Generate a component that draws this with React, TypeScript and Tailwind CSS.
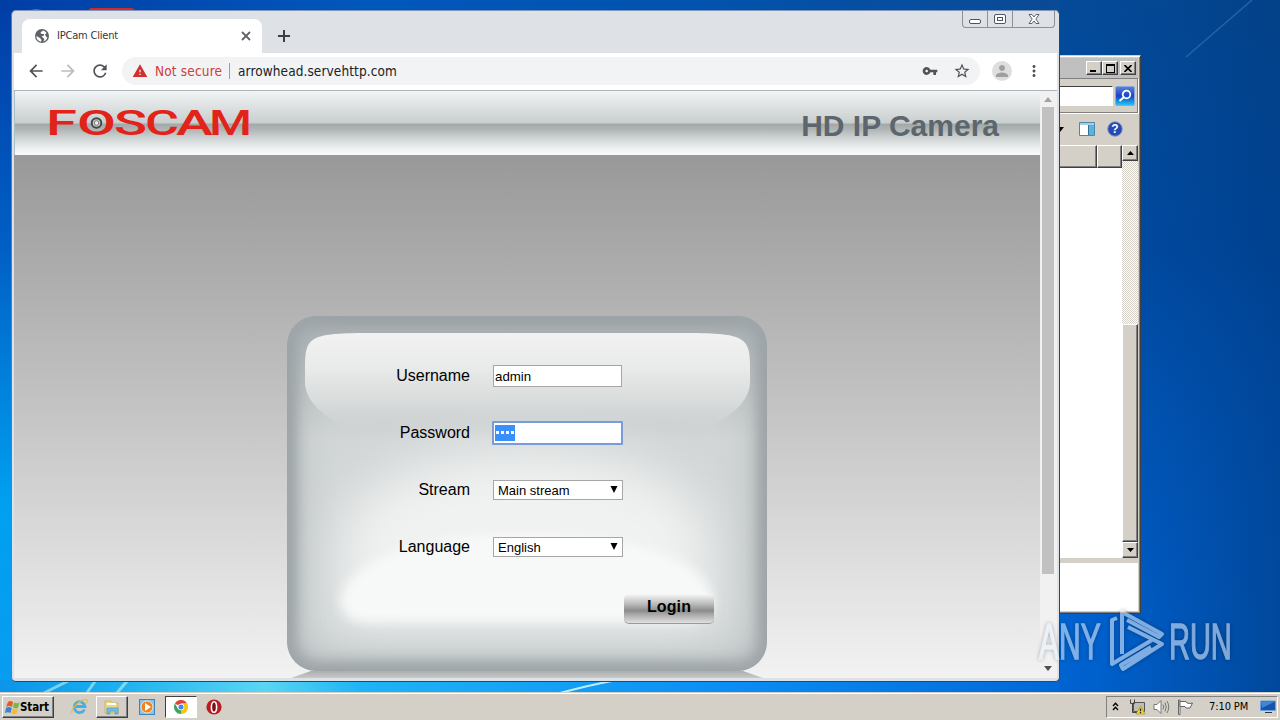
import React from 'react';
import { MdArrowBack, MdArrowForward, MdRefresh, MdWarning, MdStarBorder, MdMoreVert, MdPerson, MdVpnKey } from 'react-icons/md';

const RAISED = 'border border-t-white border-l-white border-r-[#404040] border-b-[#404040] bg-[#d4d0c8] shadow-[inset_-1px_-1px_0_#808080]';

const LOGO_LETTERS = [
  { char: 'F', x: 46, width: 31 },
  { char: 'O', x: 77, width: 39 },
  { char: 'S', x: 114, width: 33 },
  { char: 'C', x: 145, width: 34 },
  { char: 'A', x: 176, width: 37 },
  { char: 'M', x: 209, width: 43 },
];

const Wallpaper: React.FC = () => (
  <svg className="absolute inset-0" width="1280" height="720" viewBox="0 0 1280 720">
    <defs>
      <linearGradient id="left" x1="0" y1="0" x2="0" y2="1">
        <stop offset="0" stopColor="#003ea6" />
        <stop offset=".35" stopColor="#0060c6" />
        <stop offset=".7" stopColor="#00a0f0" />
        <stop offset="1" stopColor="#0b9bf0" />
      </linearGradient>
      <linearGradient id="right" x1="0" y1="0" x2="1" y2="0">
        <stop offset="0" stopColor="#0068d6" />
        <stop offset=".35" stopColor="#0060cc" />
        <stop offset="1" stopColor="#00489c" />
      </linearGradient>
      <linearGradient id="dusk" x1="0" y1="0" x2="0" y2="1">
        <stop offset="0" stopColor="#053f80" stopOpacity=".7" />
        <stop offset=".35" stopColor="#003d88" stopOpacity=".6" />
        <stop offset=".85" stopColor="#0048a0" stopOpacity="0" />
      </linearGradient>
      <linearGradient id="top" x1="0" y1="0" x2="1" y2="0">
        <stop offset="0" stopColor="#003ea6" />
        <stop offset=".35" stopColor="#0058bc" />
        <stop offset=".65" stopColor="#0053ae" />
        <stop offset="1" stopColor="#0b4a94" />
      </linearGradient>
      <linearGradient id="floor" x1="0" y1="0" x2="1" y2="0">
        <stop offset="0" stopColor="#0c94ea" />
        <stop offset=".1" stopColor="#18aef0" />
        <stop offset=".25" stopColor="#5ad6f2" />
        <stop offset=".34" stopColor="#1eb4f6" />
        <stop offset=".7" stopColor="#0a8cf4" />
        <stop offset="1" stopColor="#0068d6" />
      </linearGradient>
    </defs>
    <rect width="1280" height="720" fill="url(#left)" />
    <rect x="1000" width="280" height="720" fill="url(#right)" />
    <rect x="1000" width="280" height="720" fill="url(#dusk)" />
    <rect width="1060" height="12" fill="url(#top)" />
    <rect y="680" width="1060" height="14" fill="url(#floor)" />
    <path d="M1186 57 1252 0" stroke="#5d8fc4" strokeOpacity=".4" strokeWidth="1.5" />
    <path d="M42 694 70 680M86 694 96 680M116 694 128 680" stroke="#c5f2ef" strokeOpacity=".6" strokeWidth="3" />
    <path d="M560 693Q590 685 612 681" stroke="#bdeeff" strokeWidth="2" fill="none" />
    <path d="M24 11Q36 8 48 11" fill="#8cb4e0" />
    <rect x="89" y="8" width="45" height="5" rx="2" fill="#cf2a25" />
  </svg>
);

const ExplorerWindow: React.FC = () => (
  <div className="absolute left-[860px] top-[55px] flex h-[559px] w-[281px] flex-col border border-r-[#404040] border-b-[#404040] border-t-[#d4d0c8] border-l-[#d4d0c8] bg-[#d4d0c8] p-[2px] shadow-[inset_1px_1px_0_#fff,inset_-1px_-1px_0_#808080]">
    <div className="flex h-[20px] shrink-0 items-center justify-end bg-[#c0c0c0] pr-[2px]">
      <div className={`flex h-[14px] w-[16px] items-end pb-[2px] pl-[3px] ${RAISED}`}><div className="h-[2px] w-[6px] bg-black" /></div>
      <div className={`flex h-[14px] w-[16px] items-center justify-center ${RAISED}`}><div className="h-[9px] w-[9px] border border-t-2 border-black" /></div>
      <div className={`ml-[2px] flex h-[14px] w-[16px] items-center justify-center ${RAISED}`}>
        <svg width="8" height="7" viewBox="0 0 8 7"><path d="M.5 0 7.5 7M7.5 0 .5 7" stroke="#000" strokeWidth="1.6" /></svg>
      </div>
    </div>
    <div className="flex h-[35px] shrink-0 items-center justify-end border border-[#808080] pr-[2px] shadow-[1px_1px_0_#fff]">
      <div className="mr-[2px] h-[20px] w-[200px] border border-t-[#404040] border-l-[#404040] border-r-white border-b-white bg-white" />
      <div className="flex h-[20px] w-[20px] items-center justify-center rounded-xs border border-[#8aa8d8] bg-linear-to-b from-[#5680dc] via-[#1d40c4] to-[#28c4f0]">
        <svg width="16" height="16" viewBox="0 0 16 16" fill="none" stroke="#fff"><circle cx="9.5" cy="6.5" r="3.8" strokeWidth="1.8" /><path d="M6.500 9.500 2.500 13" strokeWidth="2" /></svg>
      </div>
    </div>
    <div className="flex h-[32px] shrink-0 items-center justify-end gap-[12px] pr-[15px]">
      <svg className="mr-[3px]" width="8" height="5" viewBox="0 0 8 5"><path d="M0 0H8L4 5Z" /></svg>
      <svg width="16" height="14" viewBox="0 0 16 14"><path d="M.5.5H15.5V13.5H.5Z" fill="#fff" stroke="#5484a8" /><path d="M1 1H15V3H1Z" fill="#a7cfe6" /><path d="M10 3H15V13H10Z" fill="#55b5dd" /><path d="M9.5 3V13" stroke="#35718f" /></svg>
      <svg width="16" height="16" viewBox="0 0 16 16"><circle cx="8" cy="8" r="7.3" fill="#2749b4" stroke="#8c9ac9" /><text x="8" y="12.4" textAnchor="middle" fontSize="12" fontWeight="700" fill="#fff" fontFamily="Liberation Sans, sans-serif">?</text></svg>
    </div>
    <div className="flex min-h-0 flex-1">
      <div className="flex flex-1 flex-col bg-white">
        <div className="flex h-[23px] justify-end">
          <div className={`h-full flex-1 ${RAISED}`} />
          <div className={`h-full w-[25px] ${RAISED}`} />
        </div>
      </div>
      <div className="flex w-[16px] flex-col bg-[#e9e6e2]">
        <div className={`flex h-[16px] items-center justify-center ${RAISED}`}><svg width="7" height="4" viewBox="0 0 7 4"><path d="M0 4H7L3.500 0Z" /></svg></div>
        <div className="flex-1 bg-[repeating-conic-gradient(#d4d0c8_0_25%,#fff_0_50%)] bg-size-[2px_2px]" />
        <div className={`h-[218px] ${RAISED}`} />
        <div className={`flex h-[16px] items-center justify-center ${RAISED}`}><svg width="7" height="4" viewBox="0 0 7 4"><path d="M0 0H7L3.500 4Z" /></svg></div>
      </div>
    </div>
    <div className="mt-[5px] h-[48px] shrink-0 bg-white" />
  </div>
);

const FoscamLogo: React.FC = () => (
  <svg width="204" height="30" viewBox="46 107 204 30" className="overflow-visible">
    <g fill="#e2231a" fontFamily="Roboto, Liberation Sans, sans-serif" fontWeight="500" fontSize="35">
      {LOGO_LETTERS.map(({ char, x, width }) => (
        <text key={char} x={x} y="135" textLength={width} lengthAdjust="spacingAndGlyphs">{char}</text>
      ))}
    </g>
    <circle cx="96.500" cy="123" r="4.800" fill="#c9cdca" stroke="#424949" strokeWidth="2" />
    <circle cx="96.500" cy="123" r="2.300" fill="#eee" stroke="#777" />
  </svg>
);

const PanelGloss: React.FC = () => (
  <svg className="absolute inset-0" width="480" height="355" viewBox="0 0 480 355">
    <defs>
      <linearGradient id="gloss" x1="0" y1="17" x2="0" y2="122" gradientUnits="userSpaceOnUse">
        <stop offset="0" stopColor="#f2f2f2" />
        <stop offset=".35" stopColor="#e8e9e9" />
        <stop offset=".65" stopColor="#d9dcdc" />
        <stop offset="1" stopColor="#d0d4d4" stopOpacity="0" />
      </linearGradient>
    </defs>
    <path d="M18 52C18 22 21 17 80 17H400C459 17 463 22 463 52V66C463 88 437 106 408 118Q390 124 360 124H120Q90 124 72 118C43 106 18 88 18 66Z" fill="url(#gloss)" />
  </svg>
);

const Row: React.FC<{ label: string; children: React.ReactNode }> = ({ label, children }) => (
  <div className="flex h-[57px] items-center">
    <label className="w-[183px] pb-[1px] text-right text-[16px] leading-[20px]">{label}</label>
    <div className="ml-[22px] pb-[2px]">{children}</div>
  </div>
);

const Select: React.FC<{ value: string }> = ({ value }) => (
  <div className="ml-px flex h-[20px] w-[130px] items-center justify-between border border-[#a6a6a6] bg-white pr-[4px] pl-[4px] text-[13px]">
    <span className="pt-[2px]">{value}</span>
    <svg width="8" height="7" viewBox="0 0 8 7"><path d="M.5 0H7.500L4 7Z" /></svg>
  </div>
);

const LoginPanel: React.FC = () => (
  <div className="relative mt-[161px] ml-[273px] h-[355px] w-[480px] overflow-hidden rounded-[29px] bg-linear-to-b from-[#a9afb1] via-[#d2d6d6] via-35% to-[#d0d5d5]">
    {/* glossy layers behind the form */}
    <div className="absolute right-[56px] bottom-[42px] left-[52px] h-[180px] rounded-t-[50%] bg-[#f0f1f1] blur-[26px]" />
    <div className="absolute top-[218px] right-[54px] left-[54px] h-[88px] rounded-[50%_50%_22px_22px/80%_80%_22px_22px] bg-[#f7f9f8] blur-[6px]" />
    <div className="absolute inset-0 rounded-[29px] shadow-[inset_0_0_44px_2px_#a6adb1,inset_0_0_13px_8px_#8f9698]" />
    <PanelGloss />

    <div className="relative pt-[32px]">
      <Row label="Username">
        <div className="ml-px flex h-[22px] w-[129px] items-center border border-[#a5a5a5] bg-white pt-[2px] pl-px text-[13.3px]">admin</div>
      </Row>
      <Row label="Password">
        <div className="flex h-[24px] w-[131px] items-center rounded-[1px] border-2 border-[#789bdc] bg-white pl-px">
          <div className="flex h-[16px] w-[20px] items-center justify-center gap-[2px] bg-[#3990fc]">
            {[0, 1, 2, 3].map((i) => (
              <i key={i} className="block h-[3px] w-[3px] bg-white" />
            ))}
          </div>
        </div>
      </Row>
      <Row label="Stream"><Select value="Main stream" /></Row>
      <Row label="Language"><Select value="English" /></Row>
      <button className="mt-[18px] ml-[337px] block h-[30px] w-[90px] rounded-[5px] border-b border-[#999] bg-[linear-gradient(to_bottom,#f6f8f7_0%,#b4b4b4_38%,#8b8b8b_58%,#a0a0a0_66%,#e0e0e0_100%)] pb-[4px] text-[16px] leading-[20px] font-bold tracking-[0.1px]">Login</button>
    </div>
  </div>
);

const BrowserWindow: React.FC = () => (
  <div className="absolute top-[10px] left-[11px] flex h-[672px] w-[1049px] flex-col overflow-hidden rounded-[5px] border border-t-[#7f97bd] border-l-[#4f7fb8] border-r-[#34455a] border-b-[#34455a] bg-[#dee1e6] px-[2px] pb-[3px]">
    <div className="flex h-[42px] shrink-0 justify-between">
      <div className="flex">
        <div className="mt-[8px] ml-[8px] flex h-[34px] w-[240px] items-center rounded-t-[8px] bg-white pr-[10px] pl-[13px]">
          <svg width="14" height="14" viewBox="0 0 14 14">
            <circle cx="7" cy="7" r="7" fill="#5f6368" />
            <path d="M8 1.500 5.500 3.500 6.500 5H9V6.500L6.500 7.500 8.500 9 9.500 11 8 12.600Q11.500 12 12.300 8.500L11 7.500 10 5.500 11.500 4Q10.500 2 8 1.500ZM1.300 7Q1.500 11.500 6 12.700L6.500 11 5 9Z" fill="#fff" />
          </svg>
          <span className="ml-[8px] flex-1 font-['DejaVu_Sans_Condensed','DejaVu_Sans',sans-serif] text-[11px] tracking-[-0.2px] text-[#33363a]">IPCam Client</span>
          <svg width="12" height="12" viewBox="0 0 12 12"><path d="M2 2 10 10M10 2 2 10" stroke="#5f6368" strokeWidth="1.800" /></svg>
        </div>
        <svg className="mt-[19px] ml-[16px]" width="12" height="12" viewBox="0 0 12 12"><path d="M0 6H12M6 0V12" stroke="#3c4043" strokeWidth="2" /></svg>
      </div>
      <div className="mr-[2px] flex h-[17px] w-[93px] divide-x divide-[#8b9199] rounded-b-[4px] border border-t-0 border-[#8b9199]">
        <div className="flex w-[25px] items-end justify-center pb-[3px]"><div className="h-[5px] w-[12px] rounded-[2px] border border-[#4c5562] bg-white" /></div>
        <div className="flex w-[25px] items-center justify-center"><div className="flex h-[10px] w-[12px] items-center justify-center rounded-[2px] border border-[#4c5562] bg-white"><div className="h-[4px] w-[6px] border border-[#4c5562]" /></div></div>
        <div className="flex flex-1 items-center justify-center">
          <svg width="12" height="10" viewBox="0 0 12 10"><path d="M1 .5H4L6 3 8 .5H11L7.800 5 11 9.500H8L6 7 4 9.500H1L4.200 5Z" fill="#fff" stroke="#4c5562" strokeWidth=".9" /></svg>
        </div>
      </div>
    </div>

    <div className="flex h-[38px] shrink-0 items-center border-b border-[#adb3ba] bg-white pb-px text-[#505357]">
      <MdArrowBack className="ml-[12px] size-[20px]" />
      <MdArrowForward className="ml-[12px] size-[20px] text-[#bbbdc0]" />
      <MdRefresh className="ml-[12px] size-[20px]" />
      <div className="ml-[12px] flex h-[28px] w-[858px] items-center rounded-full bg-[#f1f3f4] pr-[9px] pl-[10px] font-['DejaVu_Sans_Condensed','DejaVu_Sans',sans-serif] text-[13.500px]">
        <MdWarning className="size-[16px] text-[#d32f2f]" />
        <span className="ml-[7px] w-[67px] tracking-[0.17px] whitespace-nowrap text-[#d03b3b]">Not secure</span>
        <span className="mr-[8px] ml-[7px] h-[16px] w-px bg-[#9aa0a6]" />
        <span className="flex-1 tracking-[0.1px] text-[#202124]">arrowhead.servehttp.com</span>
        <MdVpnKey className="size-[16px]" />
        <MdStarBorder className="ml-[15px] size-[18px]" />
      </div>
      <div className="ml-[12px] flex size-[20px] items-center justify-center rounded-full bg-[#dedede]"><MdPerson className="size-[18px] text-[#a0a0a0]" /></div>
      <MdMoreVert className="ml-[13px] size-[18px]" />
    </div>

    <div className="flex min-h-0 flex-1 bg-[#f1f1f1]">
      <div className="flex w-[1026px] flex-col overflow-hidden bg-[linear-gradient(to_bottom,#989898_60px,#b4b4b4_225px,#d2d2d2_400px,#f2f2f2_587px)] font-['Liberation_Sans',Arial,sans-serif] text-black">
        <div className="flex h-[64px] shrink-0 justify-between border-l border-l-[#a8bfcc] bg-[linear-gradient(to_bottom,#f2f5f6_0px,#dfe3e4_14px,#c9cece_32px,#a2a7a8_33px,#b1b6b6_39px,#cbd0d0_46px,#eef2f2_58px,#f9fbfa_64px)]">
          <div className="mt-[16px] ml-[31px]"><FoscamLogo /></div>
          <h1 className="mt-[17px] mr-[41px] text-[30px] leading-[36px] font-bold text-[#5d666d]">HD IP Camera</h1>
        </div>
        <LoginPanel />
        <div className="ml-[277px] h-[7px] w-[472px] shrink-0 bg-linear-to-b from-[#aaaeae] to-[#c8c9c9] [clip-path:polygon(20px_0,452px_0,100%_100%,0_100%)]" />
      </div>
      <div className="flex w-[16px] flex-col items-center">
        <svg className="mt-[6px]" width="8" height="5" viewBox="0 0 8 5"><path d="M0 5H8L4 0Z" fill="#a3a3a3" /></svg>
        <div className="mt-[5px] h-[467px] w-[12px] bg-[#c1c1c1]" />
        <svg className="mt-auto mb-[7px]" width="8" height="5" viewBox="0 0 8 5"><path d="M0 0H8L4 5Z" fill="#505050" /></svg>
      </div>
    </div>
  </div>
);

const Watermark: React.FC = () => (
  <svg className="absolute top-[600px] left-[1030px] drop-shadow-[0_0_2px_rgba(0,0,0,0.5)]" width="230" height="80" viewBox="0 0 230 80" opacity=".55">
    <g fill="#e8f2ff" stroke="#e8f2ff" strokeWidth="1.4" fontFamily="Liberation Sans, sans-serif" fontSize="50">
      <text transform="translate(9 58.500) scale(.6 1)">ANY</text>
      <text transform="translate(139 58.500) scale(.58 1)">RUN</text>
    </g>
    <g fill="none" stroke="#e8f2ff" strokeWidth="4" strokeLinejoin="round">
      <path d="M87 18 82 20V64L122 40" />
      <path d="M92 54V12L132 34 129 37 97 20" />
      <path d="M98 27 132 44 93 69 91 65 121 47" />
    </g>
  </svg>
);

const Taskbar: React.FC = () => (
  <div className="absolute bottom-0 left-0 flex h-[28px] w-full items-center border-t border-[#d4d0c8] bg-[#d4d0c8] font-['DejaVu_Sans_Condensed','DejaVu_Sans',sans-serif] text-[11px] text-black shadow-[inset_0_1px_0_#fff]">
    <div className={`mt-px ml-[2px] flex h-[22px] w-[52px] items-center pl-[2px] ${RAISED}`}>
      <svg width="15" height="15" viewBox="0 0 15 15">
        <path d="M3 2Q5 0 8 2L7 7Q4 5 1 7Z" fill="#e45a28" />
        <path d="M9 2.500Q12 4 14.500 2.500L13 8Q10 9 8 7.500Z" fill="#77b843" />
        <path d="M1 8Q4 6 6.800 8L5.500 13Q3 11.500 0 13Z" fill="#3a82d0" />
        <path d="M7.800 8.500Q10 10 12.800 9L11.500 13.500Q9 15 6.500 13.500Z" fill="#f3bc2c" />
      </svg>
      <span className="pt-px text-[11.500px] font-bold tracking-[-0.1px]">Start</span>
    </div>
    <svg className="ml-[17px]" width="17" height="17" viewBox="0 0 17 17" fill="none">
      <path d="M13.500 11.500A5.400 5.400 0 1 1 14 8.500H4" stroke="#46aee4" strokeWidth="2.800" />
      <path d="M1 15C-1 11 12-1 16 2Q17 3 15 6" stroke="#e6bd3e" strokeWidth="1.300" />
    </svg>
    <div className={`mt-px ml-[8px] flex h-[22px] w-[32px] items-center justify-center ${RAISED}`}>
      <svg width="16" height="16" viewBox="0 0 16 16">
        <path d="M1 2H7L8 4H14V14H1Z" fill="#edd77e" stroke="#c8ac50" strokeWidth=".7" />
        <path d="M3 4H12V6H3Z" fill="#fff" />
        <path d="M3 15V9H14V15H11V12H6V15Z" fill="#73bfe4" stroke="#4695c5" strokeWidth=".7" />
      </svg>
    </div>
    <svg className="ml-[11px]" width="16" height="16" viewBox="0 0 16 16">
      <rect x=".5" y=".5" width="15" height="15" fill="#8bc2e9" stroke="#3e82bc" />
      <circle cx="8" cy="8" r="6" fill="#f0851d" stroke="#fff" strokeWidth=".7" />
      <path d="M6 4 12 8 6 12Z" fill="#fff" />
    </svg>
    <div className="mt-px ml-[10px] flex h-[22px] w-[32px] items-center justify-center border border-t-[#404040] border-l-[#404040] border-r-white border-b-white bg-white">
      <svg width="14" height="14" viewBox="0 0 30 30">
        <path d="M15 15 2 7.500A15 15 0 0 1 28 7.500H15Z" fill="#db4437" />
        <path d="M15 15 15 30A15 15 0 0 1 2 7.500L8.500 19Z" fill="#3fa45b" />
        <path d="M15 15V30A15 15 0 0 0 28 7.500H15Z" fill="#f5c518" />
        <circle cx="15" cy="15" r="7" fill="#fff" /><circle cx="15" cy="15" r="5.400" fill="#4285f4" />
      </svg>
    </div>
    <svg className="ml-[9px]" width="16" height="16" viewBox="0 0 16 16">
      <circle cx="8" cy="8" r="7.600" fill="#b91d22" />
      <ellipse cx="8" cy="8" rx="2.600" ry="5.300" fill="#7c0f14" stroke="#fff" strokeWidth="1.600" />
    </svg>

    <div className="mt-px mr-[2px] ml-auto flex h-[22px] w-[172px] items-center border border-t-[#808080] border-l-[#808080] border-r-white border-b-white pl-[5px]">
      <svg className="mb-[2px]" width="7" height="9" viewBox="0 0 7 9" fill="none" stroke="#000" strokeWidth="1.300"><path d="M1 4 3.500 1.200 6 4M1 8 3.500 5.200 6 8" /></svg>
      <svg className="ml-[10px]" width="17" height="16" viewBox="0 0 17 16">
        <path d="M4.500 3.500H15.500V12.500H4.500Z" fill="#bdbdb7" stroke="#555" />
        <path d="M1.500.5V4.500H5.500V.5M3.500 4V13.500H8" stroke="#444" fill="none" />
        <path d="M11.500 7 16 15H7Z" fill="#f7d622" stroke="#a78f10" strokeWidth=".6" /><path d="M11.500 9.500V12.200M11.500 13V14.200" stroke="#222" strokeWidth="1.300" />
      </svg>
      <svg className="ml-[7px]" width="17" height="16" viewBox="0 0 17 16" fill="none" stroke="#777">
        <path d="M1 5.500H4L8 1.500V14.500L4 10.500H1Z" fill="#fff" /><path d="M10 5.500Q11.500 8 10 10.500M12 3.500Q14.500 8 12 12.500M14 2Q17.500 8 14 14" />
      </svg>
      <svg className="ml-[7px]" width="17" height="16" viewBox="0 0 17 16" fill="#fff" stroke="#666">
        <path d="M1.500 1V15.500H3V1Z" /><path d="M3 2.500H9L10 4Q13 5 15.500 4L13 9H9L8 7.500H3Z" />
      </svg>
      <span className="ml-[15px] w-[40px] tracking-[-0.1px] whitespace-nowrap">7:10 PM</span>
      <svg className="ml-[11px]" width="16" height="14" viewBox="0 0 16 14"><path d="M.5 1H15.500V10.500H.5Z" fill="#1752ad" stroke="#6da3df" /><path d="M1 2H14L2 8Z" fill="#4386d4" /><path d="M5 12.500H12" stroke="#333" /></svg>
    </div>
  </div>
);

const App: React.FC = () => (
  <div className="relative h-[720px] w-[1280px] overflow-hidden bg-[#0058be]">
    <Wallpaper />
    <ExplorerWindow />
    <BrowserWindow />
    <Taskbar />
    <Watermark />
  </div>
);

export default App;
